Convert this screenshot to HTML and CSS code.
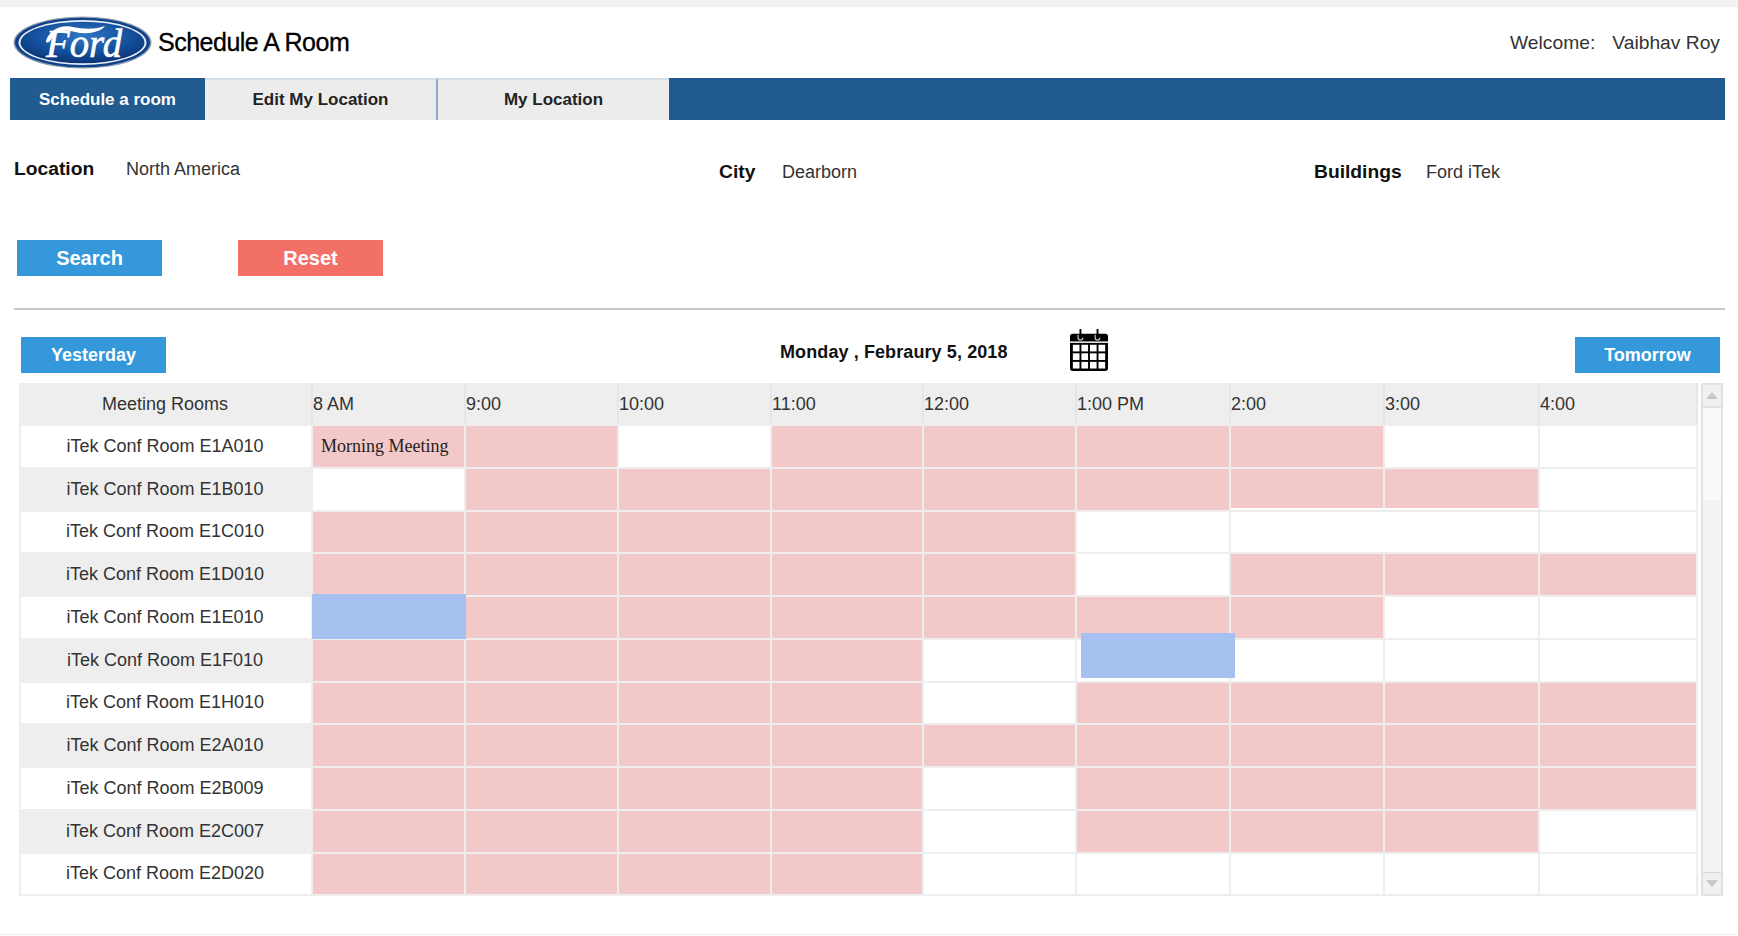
FILE: index.html
```html
<!DOCTYPE html>
<html>
	<head>
		<title>Schedule A Room</title>
		<meta http-equiv="Content-Type" content="text/html; charset=utf-8" />
		<link rel="stylesheet" href="styles.css">
	</head>
	<body>
		<div class="topStrip"></div>

		<div class="header">
			<svg class="logo" width="139" height="53" viewBox="0 0 139 53">
				<defs>
					<radialGradient id="fordBlue" cx="50%" cy="35%" r="65%">
						<stop offset="0" stop-color="#2f77c4"/>
						<stop offset="0.6" stop-color="#14519e"/>
						<stop offset="1" stop-color="#0b3274"/>
					</radialGradient>
				</defs>
				<ellipse cx="69.5" cy="26.5" rx="69" ry="26" fill="#8d9cae"/>
				<ellipse cx="69.5" cy="26.5" rx="67.5" ry="24.8" fill="#0f4289"/>
				<ellipse cx="69.5" cy="26.5" rx="64" ry="22.4" fill="#e6eef6"/>
				<ellipse cx="69.5" cy="26.5" rx="62" ry="20.8" fill="url(#fordBlue)"/>
				<path d="M33 25 C36 14 48 8 60 11 C70 13 80 14 92 10 C88 16 74 19 62 16 C52 13 43 15 37 25 C35 27 33 27 33 25 Z" fill="#fff"/>
				<text class="logoText" x="33" y="41" textLength="76" lengthAdjust="spacingAndGlyphs">Ford</text>
			</svg>
			<div class="pageTitle">Schedule A Room</div>
			<div class="welcome"><span>Welcome:</span><span>Vaibhav Roy</span></div>
		</div>

		<div class="nav">
			<a class="tab tabActive">Schedule a room</a>
			<a class="tab tabEdit">Edit My Location</a>
			<a class="tab tabMine">My Location</a>
		</div>

		<div class="filters">
			<div class="filter filterLocation"><label>Location</label><span>North America</span></div>
			<div class="filter filterCity"><label>City</label><span>Dearborn</span></div>
			<div class="filter filterBuilding"><label>Buildings</label><span>Ford iTek</span></div>
		</div>

		<div class="actions">
			<button class="btn btnBlue btnMain">Search</button>
			<button class="btn btnRed btnMain">Reset</button>
		</div>

		<div class="divider"></div>

		<div class="dayBar">
			<button class="btn btnBlue">Yesterday</button>
			<div class="dayTitle">Monday , Febraury 5, 2018</div>
			<svg class="calIcon" width="38" height="42" viewBox="0 0 40 44">
				<path d="M3 5 H37 A3 3 0 0 1 40 8 V41 A3 3 0 0 1 37 44 H3 A3 3 0 0 1 0 41 V8 A3 3 0 0 1 3 5 Z" fill="#000"/>
				<rect x="0" y="13" width="40" height="1.5" fill="#fff"/>
				<g fill="#fff">
					<rect x="3" y="16.5" width="7" height="7"/><rect x="12" y="16.5" width="7" height="7"/><rect x="21" y="16.5" width="7" height="7"/><rect x="30" y="16.5" width="7" height="7"/>
					<rect x="3" y="25.5" width="7" height="7"/><rect x="12" y="25.5" width="7" height="7"/><rect x="21" y="25.5" width="7" height="7"/><rect x="30" y="25.5" width="7" height="7"/>
					<rect x="3" y="34.5" width="7" height="7"/><rect x="12" y="34.5" width="7" height="7"/><rect x="21" y="34.5" width="7" height="7"/><rect x="30" y="34.5" width="7" height="7"/>
				</g>
				<path d="M8.5 6 V9 A2.5 2.5 0 0 0 13.5 9 M26.5 6 V9 A2.5 2.5 0 0 0 31.5 9" fill="none" stroke="#ccc" stroke-width="1.2"/>
				<path d="M11 0 V9 M29 0 V9" fill="none" stroke="#000" stroke-width="2"/>
			</svg>
			<button class="btn btnBlue btnTomorrow">Tomorrow</button>
		</div>

		<div class="schedule">
			<table class="grid">
				<colgroup>
					<col class="colRoom"><col class="c153"><col class="c153"><col class="c153"><col class="c152"><col class="c153"><col class="c154"><col class="c154"><col class="c155"><col class="c158">
				</colgroup>
				<tr class="head">
					<th class="room">Meeting Rooms</th><th>8 AM</th><th>9:00</th><th>10:00</th><th>11:00</th><th>12:00</th><th>1:00 PM</th><th>2:00</th><th>3:00</th><th>4:00</th>
				</tr>
				<tr>
					<td class="room">iTek Conf Room E1A010</td>
					<td class="busy meeting">Morning Meeting</td><td class="busy"></td><td></td><td class="busy"></td><td class="busy"></td><td class="busy"></td><td class="busy"></td><td></td><td></td>
				</tr>
				<tr>
					<td class="room alt">iTek Conf Room E1B010</td>
					<td></td><td class="busy"></td><td class="busy"></td><td class="busy"></td><td class="busy"></td><td class="busy"></td><td class="busy"></td><td class="busy"></td><td></td>
				</tr>
				<tr>
					<td class="room">iTek Conf Room E1C010</td>
					<td class="busy"></td><td class="busy"></td><td class="busy"></td><td class="busy"></td><td class="busy"></td><td></td><td class="wide" colspan="2"></td><td></td>
				</tr>
				<tr>
					<td class="room alt">iTek Conf Room E1D010</td>
					<td class="busy"></td><td class="busy"></td><td class="busy"></td><td class="busy"></td><td class="busy"></td><td></td><td class="busy"></td><td class="busy"></td><td class="busy"></td>
				</tr>
				<tr>
					<td class="room">iTek Conf Room E1E010</td>
					<td class="slot"><div class="picked pickedFirst"></div></td><td class="busy"></td><td class="busy"></td><td class="busy"></td><td class="busy"></td><td class="busy"></td><td class="busy"></td><td></td><td></td>
				</tr>
				<tr>
					<td class="room alt">iTek Conf Room E1F010</td>
					<td class="busy"></td><td class="busy"></td><td class="busy"></td><td class="busy"></td><td></td><td class="slot"><div class="picked pickedSecond"></div></td><td></td><td></td><td></td>
				</tr>
				<tr>
					<td class="room">iTek Conf Room E1H010</td>
					<td class="busy"></td><td class="busy"></td><td class="busy"></td><td class="busy"></td><td></td><td class="busy"></td><td class="busy"></td><td class="busy"></td><td class="busy"></td>
				</tr>
				<tr>
					<td class="room alt">iTek Conf Room E2A010</td>
					<td class="busy"></td><td class="busy"></td><td class="busy"></td><td class="busy"></td><td class="busy"></td><td class="busy"></td><td class="busy"></td><td class="busy"></td><td class="busy"></td>
				</tr>
				<tr>
					<td class="room">iTek Conf Room E2B009</td>
					<td class="busy"></td><td class="busy"></td><td class="busy"></td><td class="busy"></td><td></td><td class="busy"></td><td class="busy"></td><td class="busy"></td><td class="busy"></td>
				</tr>
				<tr>
					<td class="room alt">iTek Conf Room E2C007</td>
					<td class="busy"></td><td class="busy"></td><td class="busy"></td><td class="busy"></td><td></td><td class="busy"></td><td class="busy"></td><td class="busy"></td><td></td>
				</tr>
				<tr>
					<td class="room">iTek Conf Room E2D020</td>
					<td class="busy"></td><td class="busy"></td><td class="busy"></td><td class="busy"></td><td></td><td></td><td></td><td></td><td></td>
				</tr>
			</table>
			<div class="scrollBar">
				<div class="scrollBtn"><span class="arrowUp"></span></div>
				<div class="scrollThumb"></div>
				<div class="scrollTrack"></div>
				<div class="scrollBtn scrollBtnEnd"><span class="arrowDown"></span></div>
			</div>
		</div>

		<div class="footLine"></div>
	</body>
</html>
```
FILE: styles.css
```css
html {
	overflow: hidden;
}
body {
	margin: 0;
	padding: 0;
	height: 936px;
	overflow: hidden;
	background: #fff;
	color: #333;
	font-family: "Liberation Sans", Arial, sans-serif;
	font-size: 18px;
}
.topStrip {
	height: 7px;
	background: #f2f2f2;
}
.header {
	display: flex;
	align-items: center;
	height: 71px;
	padding: 0 18px 0 13px;
}
.logo {
	flex: none;
}
.logoText {
	font-family: "Liberation Serif", serif;
	font-style: italic;
	font-size: 40px;
	fill: #fff;
	stroke: #fff;
	stroke-width: 0.6px;
}
.pageTitle {
	margin-left: 6px;
	font-size: 25px;
	letter-spacing: -0.5px;
	color: #000;
	-webkit-text-stroke: 0.3px #000;
}
.welcome {
	display: flex;
	gap: 17px;
	margin-left: auto;
	font-size: 19.25px;
}

.nav {
	display: flex;
	height: 42px;
	margin: 0 13px 0 10px;
	background: #215b8f;
	font-size: 17px;
	font-weight: bold;
}
.tab {
	display: flex;
	align-items: center;
	justify-content: center;
	box-sizing: border-box;
	color: #222;
	background: #ececec;
	border-top: 2px solid #d4dde6;
}
.tabActive {
	width: 195px;
	color: #fff;
	background: #215b8f;
	border-top-color: #215b8f;
}
.tabEdit {
	width: 233px;
	border-right: 2px solid #8ba8c8;
}
.tabMine {
	width: 231px;
}

.filters {
	display: grid;
	grid-template-columns: 705px 595px 1fr;
	padding: 38px 0 0 14px;
	height: 74px;
	box-sizing: border-box;
}
.filter {
	display: flex;
	align-items: center;
	height: 22px;
}
.filter label {
	font-size: 19.25px;
	font-weight: bold;
	color: #111;
}
.filterLocation label {
	width: 112px;
}
.filterCity, .filterBuilding {
	margin-top: 3px;
}
.filterCity label {
	width: 63px;
}
.filterBuilding label {
	width: 112px;
}

.btn {
	display: block;
	box-sizing: border-box;
	width: 145px;
	height: 36px;
	padding: 0;
	border: 0;
	color: #fff;
	font-family: "Liberation Sans", Arial, sans-serif;
	font-size: 18px;
	font-weight: bold;
}
.btnMain {
	font-size: 20px;
}
.btnBlue {
	background: #3498db;
}
.btnRed {
	background: #f37067;
}
.actions {
	display: flex;
	gap: 76px;
	padding: 46px 0 0 17px;
}
.divider {
	height: 2px;
	margin: 32px 13px 0 14px;
	background: #c9c9c9;
}

.dayBar {
	display: flex;
	align-items: flex-start;
	height: 73px;
	padding-left: 21px;
	box-sizing: border-box;
}
.dayBar .btn {
	margin-top: 27px;
}
.dayTitle {
	width: 227px;
	margin: 32px 0 0 614px;
	color: #111;
	font-size: 18px;
	font-weight: bold;
	letter-spacing: 0.1px;
	white-space: nowrap;
}
.calIcon {
	margin: 19px 0 0 63px;
}
.btnTomorrow {
	margin-left: 467px;
}

.schedule {
	display: flex;
	align-items: stretch;
	gap: 3px;
	padding-left: 19px;
}
.grid {
	table-layout: fixed;
	width: 1677px;
	height: 511px;
	border-collapse: collapse;
}
.colRoom { width: 292px; }
.c152 { width: 152px; }
.c153 { width: 153px; }
.c154 { width: 154px; }
.c155 { width: 155px; }
.c158 { width: 158px; }
.grid th, .grid td {
	box-sizing: border-box;
	padding: 0;
	border: 2px solid #eeeeee;
	height: 42.75px;
	font-weight: normal;
}
.grid .head th {
	height: 41px;
	background: #eeeeee;
	border-right-color: #e6e6e6;
	text-align: left;
}
.grid .room {
	padding: 0 2px 0 0;
	text-align: center;
	background: #fff;
}
.grid .head .room, .grid .alt {
	background: #eeeeee;
}
.grid .head .room {
	text-align: center;
}
.grid .busy {
	background: #f2c9c8;
}
.grid .meeting {
	padding-left: 8px;
	font-family: "Liberation Serif", serif;
	color: #222;
}
.slot {
	position: relative;
}
.wide {
	background: #fff;
	box-shadow: 0 -3px 0 #fff;
}
.picked {
	position: absolute;
	width: 154px;
	height: 45px;
	background: #a6c0f0;
}
.pickedFirst {
	top: -3px;
	left: -1px;
}
.pickedSecond {
	top: -7px;
	left: 4px;
}

.scrollBar {
	display: flex;
	flex-direction: column;
	box-sizing: border-box;
	width: 22px;
	border: 2px solid #e2e2e2;
	background: #f5f5f5;
}
.scrollBtn {
	display: flex;
	align-items: center;
	justify-content: center;
	height: 21px;
	background: #f0f0f0;
	border-bottom: 2px solid #e0e0e0;
}
.scrollBtnEnd {
	border-top: 1px solid #d5d5d5;
	border-bottom: 0;
}
.scrollThumb {
	height: 92px;
	background: #fafafa;
}
.scrollTrack {
	flex: 1;
	background: #f3f3f3;
}
.arrowUp {
	border: 6px solid transparent;
	border-top: 0;
	border-bottom: 7px solid #c8c8c8;
}
.arrowDown {
	border: 6px solid transparent;
	border-bottom: 0;
	border-top: 7px solid #c8c8c8;
}
.footLine {
	height: 1px;
	margin-top: 38px;
	background: #eeeeee;
}
```
